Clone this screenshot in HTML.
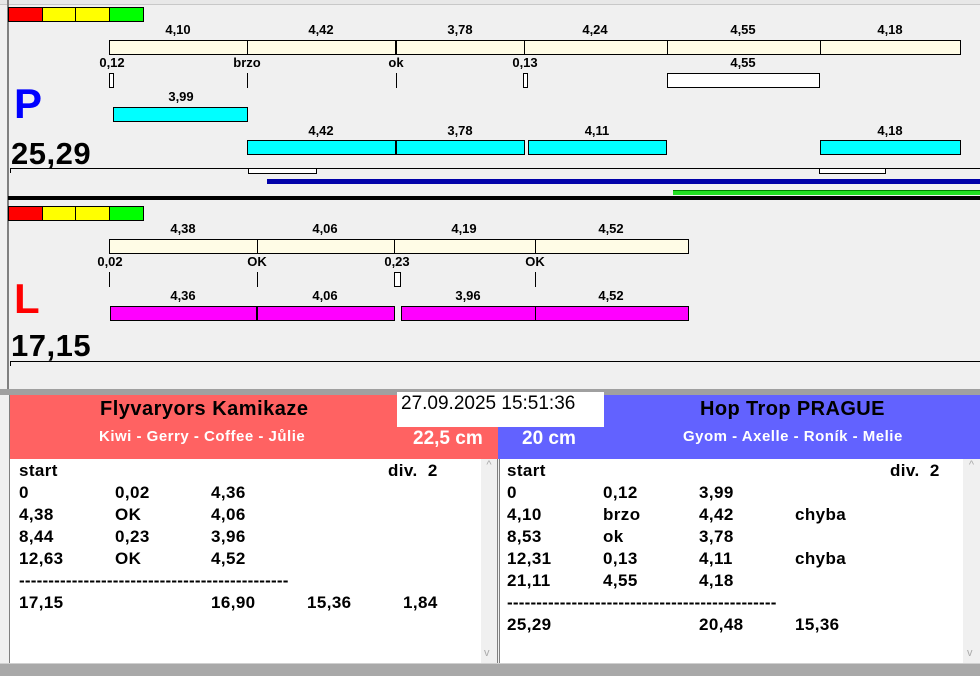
<!DOCTYPE html>
<html><head><meta charset="utf-8"><style>
*{margin:0;padding:0}
body{width:980px;height:676px;overflow:hidden;background:#f0f0f0;position:relative;font-family:"Liberation Sans",Arial,sans-serif}
div{position:absolute;box-sizing:border-box}
.b{border:1px solid #000}
.c{background:#fffce6}
.cy{background:#00ffff}
.m{background:#ff00ff}
.t{font-weight:bold;font-size:13px;line-height:14px;transform:translateX(-50%);white-space:nowrap;color:#000}
.ln{background:#000;width:1px}
.tx{font-weight:bold;font-size:17px;line-height:22px;white-space:nowrap;letter-spacing:0.4px}
.d{letter-spacing:0.2px}
</style></head><body>
<div style="left:0;top:0;width:980px;height:5px;background:#e8e8e8;border-bottom:1px solid #c8c8c8"></div>
<div style="left:7px;top:0;width:2px;height:390px;background:#808080"></div>

<div class="b" style="left:8px;top:7px;width:136px;height:15px;background:linear-gradient(90deg,#f00 0 34px,#ff0 34px 66px,#ff0 66px 101px,#0f0 101px)"></div>
<div class="ln" style="left:42px;top:7px;height:15px"></div><div class="ln" style="left:75px;top:7px;height:15px"></div><div class="ln" style="left:109px;top:7px;height:15px"></div>

<div class="t" style="left:178px;top:23px">4,10</div><div class="t" style="left:321px;top:23px">4,42</div><div class="t" style="left:460px;top:23px">3,78</div><div class="t" style="left:595px;top:23px">4,24</div><div class="t" style="left:743px;top:23px">4,55</div><div class="t" style="left:890px;top:23px">4,18</div>
<div class="b c" style="left:109px;top:40px;width:852px;height:15px"></div>
<div class="ln" style="left:247px;top:40px;height:15px"></div><div class="ln" style="left:395px;top:40px;height:15px;width:2px"></div><div class="ln" style="left:524px;top:40px;height:15px"></div><div class="ln" style="left:667px;top:40px;height:15px"></div><div class="ln" style="left:820px;top:40px;height:15px"></div>
<div class="t" style="left:112px;top:56px">0,12</div><div class="t" style="left:247px;top:56px">brzo</div><div class="t" style="left:396px;top:56px">ok</div><div class="t" style="left:525px;top:56px">0,13</div><div class="t" style="left:743px;top:56px">4,55</div>
<div class="b" style="left:109px;top:73px;width:5px;height:15px;background:#fff"></div>
<div class="ln" style="left:247px;top:73px;height:15px"></div><div class="ln" style="left:396px;top:73px;height:15px"></div>
<div class="b" style="left:523px;top:73px;width:5px;height:15px;background:#fff"></div>
<div class="b" style="left:667px;top:73px;width:153px;height:15px;background:#fff"></div>
<div style="left:14px;top:80px;font-weight:bold;font-size:42px;line-height:48px;color:#0000ff">P</div>
<div class="t" style="left:181px;top:90px">3,99</div>
<div class="b cy" style="left:113px;top:107px;width:135px;height:15px"></div>
<div class="t" style="left:321px;top:124px">4,42</div><div class="t" style="left:460px;top:124px">3,78</div><div class="t" style="left:597px;top:124px">4,11</div><div class="t" style="left:890px;top:124px">4,18</div>
<div class="b cy" style="left:247px;top:140px;width:278px;height:15px"></div>
<div class="ln" style="left:395px;top:140px;height:15px;width:2px"></div>
<div class="b cy" style="left:528px;top:140px;width:139px;height:15px"></div>
<div class="b cy" style="left:820px;top:140px;width:141px;height:15px"></div>
<div style="left:11px;top:136px;font-weight:bold;font-size:31px;line-height:36px;letter-spacing:0.5px">25,29</div>
<div style="left:10px;top:168px;width:970px;height:1px;background:#000"></div>
<div class="ln" style="left:10px;top:168px;height:5px"></div>
<div class="b" style="left:248px;top:168px;width:69px;height:6px;background:#fff"></div>
<div class="b" style="left:819px;top:168px;width:67px;height:6px;background:#fff"></div>
<div style="left:267px;top:179px;width:713px;height:5px;background:#0000a8"></div>
<div style="left:673px;top:190px;width:307px;height:5px;background:#22e022;border-top:1px solid #008000"></div>
<div style="left:8px;top:196px;width:972px;height:4px;background:#000"></div>

<div class="b" style="left:8px;top:206px;width:136px;height:15px;background:linear-gradient(90deg,#f00 0 34px,#ff0 34px 66px,#ff0 66px 101px,#0f0 101px)"></div>
<div class="ln" style="left:42px;top:206px;height:15px"></div><div class="ln" style="left:75px;top:206px;height:15px"></div><div class="ln" style="left:109px;top:206px;height:15px"></div>
<div class="t" style="left:183px;top:222px">4,38</div><div class="t" style="left:325px;top:222px">4,06</div><div class="t" style="left:464px;top:222px">4,19</div><div class="t" style="left:611px;top:222px">4,52</div>
<div class="b c" style="left:109px;top:239px;width:580px;height:15px"></div>
<div class="ln" style="left:257px;top:239px;height:15px"></div><div class="ln" style="left:394px;top:239px;height:15px"></div><div class="ln" style="left:535px;top:239px;height:15px"></div>
<div class="t" style="left:110px;top:255px">0,02</div><div class="t" style="left:257px;top:255px">OK</div><div class="t" style="left:397px;top:255px">0,23</div><div class="t" style="left:535px;top:255px">OK</div>
<div class="ln" style="left:109px;top:272px;height:15px"></div><div class="ln" style="left:257px;top:272px;height:15px"></div>
<div class="b" style="left:394px;top:272px;width:7px;height:15px;background:#fff"></div>
<div class="ln" style="left:535px;top:272px;height:15px"></div>
<div style="left:14px;top:275px;font-weight:bold;font-size:42px;line-height:48px;color:#ff0000">L</div>
<div class="t" style="left:183px;top:289px">4,36</div><div class="t" style="left:325px;top:289px">4,06</div><div class="t" style="left:468px;top:289px">3,96</div><div class="t" style="left:611px;top:289px">4,52</div>
<div class="b m" style="left:110px;top:306px;width:285px;height:15px"></div>
<div class="ln" style="left:256px;top:306px;height:15px;width:2px"></div>
<div class="b m" style="left:401px;top:306px;width:288px;height:15px"></div>
<div class="ln" style="left:535px;top:306px;height:15px"></div>
<div style="left:11px;top:328px;font-weight:bold;font-size:31px;line-height:36px;letter-spacing:0.5px">17,15</div>
<div style="left:10px;top:361px;width:970px;height:1px;background:#000"></div>
<div class="ln" style="left:10px;top:361px;height:5px"></div>

<div style="left:0;top:389px;width:980px;height:6px;background:#a0a0a0"></div>
<div style="left:0;top:395px;width:10px;height:281px;background:#f0f0f0;border-right:1px solid #808080"></div>

<div style="left:10px;top:395px;width:488px;height:64px;background:#ff6262"></div>
<div style="left:498px;top:395px;width:482px;height:64px;background:#6262ff"></div>
<div style="left:100px;top:397px;font-weight:bold;font-size:20px;line-height:24px;letter-spacing:0.5px">Flyvaryors Kamikaze</div>
<div style="left:99px;top:428px;font-weight:bold;font-size:15px;letter-spacing:0.5px;color:#fff">Kiwi - Gerry - Coffee - Jůlie</div>
<div style="left:413px;top:428px;font-weight:bold;font-size:19px;color:#fff">22,5 cm</div>
<div style="left:522px;top:428px;font-weight:bold;font-size:19px;color:#fff">20 cm</div>
<div style="left:700px;top:397px;font-weight:bold;font-size:20px;line-height:24px;letter-spacing:0.4px">Hop Trop PRAGUE</div>
<div style="left:683px;top:428px;font-weight:bold;font-size:15px;letter-spacing:0.5px;color:#fff">Gyom - Axelle - Roník - Melie</div>
<div style="left:397px;top:392px;width:207px;height:35px;background:#fff;font-size:19px;line-height:24px;padding-left:4px">27.09.2025 15:51:36</div>

<div style="left:10px;top:459px;width:488px;height:204px;background:#fff;border-right:1px solid #808080"></div>
<div style="left:481px;top:459px;width:16px;height:204px;background:#f0f0f0;color:#aaa;font-size:11px;text-align:center">^<div style="top:188px;left:3px">v</div></div>
<div style="left:499px;top:459px;width:481px;height:204px;background:#fff;border-left:1px solid #808080"></div>
<div style="left:963px;top:459px;width:17px;height:204px;background:#f0f0f0;color:#aaa;font-size:11px;text-align:center">^<div style="top:188px;left:4px">v</div></div>
<div style="left:0;top:663px;width:980px;height:13px;background:#a9a9a9;border-top:1px solid #d0d0d0"></div>

<div class="tx" style="left:19px;top:460px">start<br>0<br>4,38<br>8,44<br>12,63<br><span class="d">----------------------------------------------</span><br>17,15</div>
<div class="tx" style="left:115px;top:482px">0,02<br>OK<br>0,23<br>OK</div>
<div class="tx" style="left:211px;top:482px">4,36<br>4,06<br>3,96<br>4,52<br><br>16,90</div>
<div class="tx" style="left:307px;top:592px">15,36</div>
<div class="tx" style="left:403px;top:592px">1,84</div>
<div class="tx" style="left:388px;top:460px">div.&nbsp; 2</div>

<div class="tx" style="left:507px;top:460px">start<br>0<br>4,10<br>8,53<br>12,31<br>21,11<br><span class="d">----------------------------------------------</span><br>25,29</div>
<div class="tx" style="left:603px;top:482px">0,12<br>brzo<br>ok<br>0,13<br>4,55</div>
<div class="tx" style="left:699px;top:482px">3,99<br>4,42<br>3,78<br>4,11<br>4,18<br><br>20,48</div>
<div class="tx" style="left:795px;top:504px">chyba<br><br>chyba<br><br><br>15,36</div>
<div class="tx" style="left:890px;top:460px">div.&nbsp; 2</div>
</body></html>
